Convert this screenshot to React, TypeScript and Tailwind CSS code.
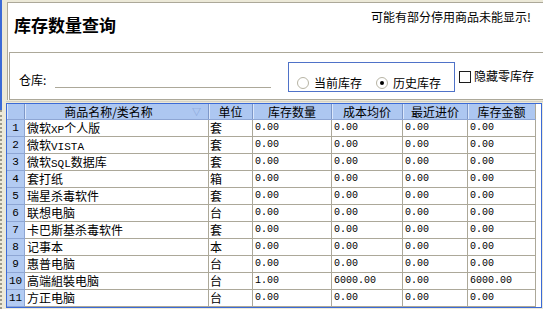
import React from "react";

const rows: string[][] = [
  ["微软XP个人版", "套", "0.00", "0.00", "0.00", "0.00"],
  ["微软VISTA", "套", "0.00", "0.00", "0.00", "0.00"],
  ["微软SQL数据库", "套", "0.00", "0.00", "0.00", "0.00"],
  ["套打纸", "箱", "0.00", "0.00", "0.00", "0.00"],
  ["瑞星杀毒软件", "套", "0.00", "0.00", "0.00", "0.00"],
  ["联想电脑", "台", "0.00", "0.00", "0.00", "0.00"],
  ["卡巴斯基杀毒软件", "套", "0.00", "0.00", "0.00", "0.00"],
  ["记事本", "本", "0.00", "0.00", "0.00", "0.00"],
  ["惠普电脑", "台", "0.00", "0.00", "0.00", "0.00"],
  ["高端組裝电脑", "台", "1.00", "6000.00", "0.00", "6000.00"],
  ["方正电脑", "台", "0.00", "0.00", "0.00", "0.00"],
];

// ascii runs render like the narrow half-width font of the original grid
function Txt({ s }: { s: string }) {
  const parts = s.split(/([A-Za-z0-9.]+)/);
  return (
    <>
      {parts.map((p, i) =>
        /^[A-Za-z0-9.]+$/.test(p) ? (
          <span key={i} className="font-['Liberation_Mono',monospace] text-[11px]">
            {p}
          </span>
        ) : (
          <span key={i}>{p}</span>
        )
      )}
    </>
  );
}

function HeadCell({ w, label, last }: { w: string; label: string; last?: boolean }) {
  return (
    <div
      className={`${w} h-full shrink-0 text-center border-r ${
        last ? "border-[#aca899]" : "border-[#7d97c8]"
      } shadow-[inset_1px_0_0_#dbe7fb]`}
    >
      {label}
    </div>
  );
}

function Radio({ checked, label }: { checked?: boolean; label: string }) {
  return (
    <div className="flex items-center gap-[5px]">
      <div className="w-[12px] h-[12px] rounded-full border border-[#b7b4a4] bg-white flex items-center justify-center">
        {checked && <div className="w-[4px] h-[4px] rounded-full bg-black" />}
      </div>
      <span>{label}</span>
    </div>
  );
}

export default function App() {
  return (
    <div className="w-[543px] h-[309px] overflow-hidden bg-[#ece9d8] flex font-['Noto_Sans_CJK_SC',sans-serif] text-[12px] leading-[16px] text-black">
      {/* left edge strip */}
      <div className="w-[2px] shrink-0 flex flex-col">
        <div className="h-[110px] bg-[#3b6ad6]" />
        <div className="flex-1 border-l-2 border-dotted border-[#9d9a8a]" />
      </div>
      <div className="w-[4px] shrink-0" />

      <div className="w-[537px] flex flex-col">
        {/* ---------- top panel ---------- */}
        <div className="ml-[1px] mt-[2px] bg-white border-t border-l border-[#aca899] flex flex-col">
          <div className="h-[49px] flex justify-between items-start">
            <div className="ml-[6px] mt-[12px] text-[17px] leading-[20px] font-bold">库存数量查询</div>
            <div className="mr-[12px] mt-[6px]">可能有部分停用商品未能显示!</div>
          </div>

          <div className="ml-[1px] h-[48px] border-t border-l border-b border-[#aca899] flex items-start">
            <div className="ml-[9px] mt-[19px] w-[36px] shrink-0">仓库:</div>
            <div className="mt-[19px] w-[216px] h-[16px] border-b border-[#aca899] shrink-0" />
            <div className="ml-[17px] mt-[9px] w-[167px] h-[30px] border border-[#4f72c8] flex items-start pl-[8px] pt-[12px] gap-[14px] shrink-0">
              <Radio label="当前库存" />
              <Radio checked label="历史库存" />
            </div>
            <div className="ml-[4px] mt-[16px] flex items-center gap-[3px]">
              <div className="w-[12px] h-[12px] border border-[#1c1c1c] bg-white shrink-0" />
              <span className="-mt-[1px]">隐藏零库存</span>
            </div>
          </div>
        </div>

        <div className="h-[3px] flex flex-col justify-center">
          <div className="h-[1px] bg-[#d4d0c4]" />
        </div>

        {/* ---------- grid ---------- */}
        <div className="w-[536px] h-[205px] border border-[#3b6ad6] bg-white flex flex-col">
          <div className="h-[16px] flex">
            <div className="flex h-full bg-[#adc7f1] border-b border-[#8ea6d4]">
              <HeadCell w="w-[18px]" label="" />
              <div className="w-[184px] h-full shrink-0 flex border-r border-[#7d97c8] shadow-[inset_1px_0_0_#dbe7fb]">
                <div className="flex-1 text-center">商品名称/类名称</div>
                <div className="w-[16px] text-[9px] text-[#7f9bd2] leading-[16px]">▽</div>
              </div>
              <HeadCell w="w-[44px]" label="单位" />
              <HeadCell w="w-[79px]" label="库存数量" />
              <HeadCell w="w-[71px]" label="成本均价" />
              <HeadCell w="w-[65px]" label="最近进价" />
              <HeadCell w="w-[68px]" label="库存金额" last />
            </div>
          </div>

          {rows.map((r, i) => (
            <div key={i} className="h-[17px] flex">
              <div className="w-[18px] shrink-0 bg-[#b3cbf2] border-r border-b border-[#8ea6d4] text-center font-['Liberation_Mono',monospace] text-[11px] leading-[16px]">
                {i + 1}
              </div>
              <div className="w-[184px] shrink-0 border-r border-b border-[#aca899] pl-[2px]">
                <Txt s={r[0]} />
              </div>
              <div className="w-[44px] shrink-0 border-r border-b border-[#aca899] pl-[1px]">{r[1]}</div>
              {[r[2], r[3], r[4], r[5]].map((v, j) => (
                <div
                  key={j}
                  className={`${
                    j === 0 ? "w-[79px]" : j === 1 ? "w-[71px]" : j === 2 ? "w-[65px]" : "w-[68px]"
                  } shrink-0 border-r border-b border-[#aca899] pl-[2px] font-['Liberation_Mono',monospace] text-[10px] leading-[16px]`}
                >
                  {v}
                </div>
              ))}
            </div>
          ))}
        </div>
      </div>
    </div>
  );
}
